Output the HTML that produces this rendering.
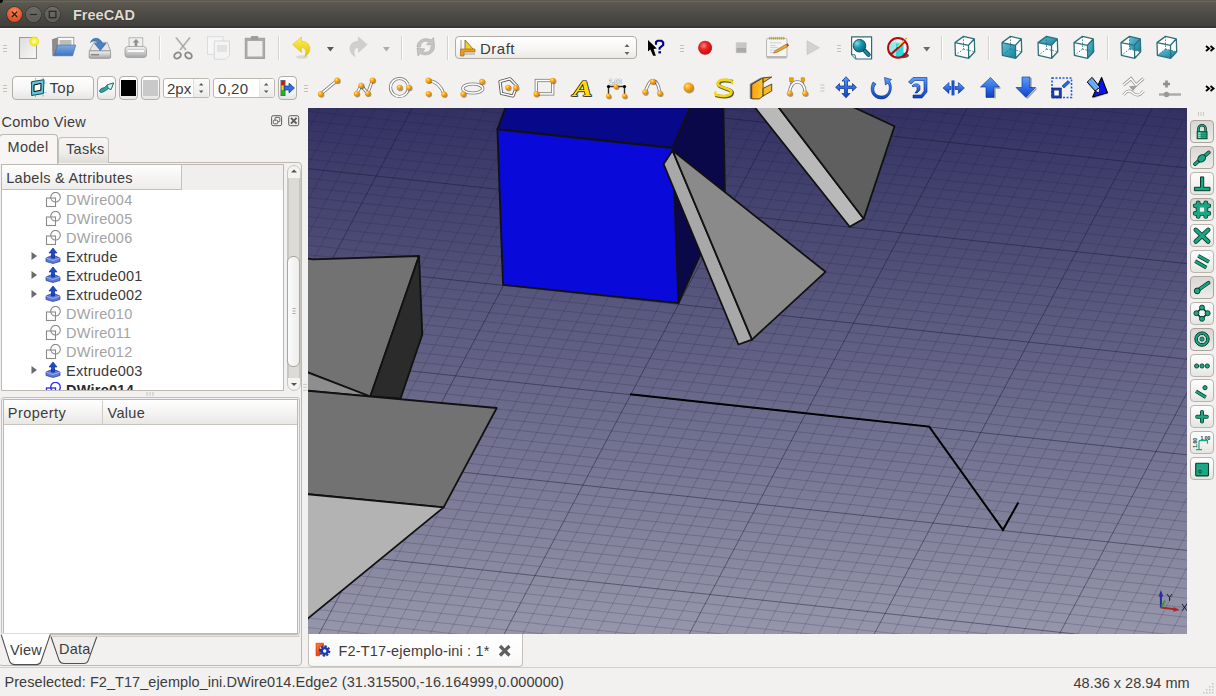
<!DOCTYPE html><html><head><meta charset="utf-8"><style>
*{margin:0;padding:0;box-sizing:border-box}
html,body{width:1216px;height:696px;overflow:hidden;background:#f2f1f0;font-family:"Liberation Sans",sans-serif;color:#3c3c3c}
.a{position:absolute}
#title{left:0;top:0;width:1216px;height:28px;background:linear-gradient(#57544d 0px,#68655b 1.5px,#5a5750 3px,#403f3b 26px,#33322f 27px,#33322f 28px)}
.wb{position:absolute;top:6px;width:16px;height:16px;border-radius:50%}
#ttl{left:73px;top:7px;font-size:14.5px;font-weight:bold;color:#dfdbd2;text-shadow:0 0 1px #1a1a1a}
#tb1{left:0;top:28px;width:1216px;height:80px;background:#f2f1f0;border-top:1px solid #fbfbfa}
.sep{position:absolute;width:2px;height:24px;background:linear-gradient(90deg,#d5d2cd 50%,#fdfdfd 50%)}
.btn{position:absolute;height:24px;border:1px solid #b3aea7;border-radius:4px;background:linear-gradient(#fefefe,#f7f6f5 55%,#e8e6e3)}
.spin{position:absolute;height:20px;border:1px solid #bcb8b1;border-radius:3px;background:#fff}
.txt{position:absolute;white-space:nowrap;font-size:14.5px;line-height:17px}
#vp{left:308px;top:108px;width:879px;height:526px}
.row{position:absolute;left:0;height:19px;width:282px}
.rb{position:absolute;left:1190px;width:23.5px;height:22.5px;border:1px solid #b9b5ae;border-radius:4px;background:linear-gradient(#fdfdfd,#f2f1ef 60%,#e6e4e1)}
.rb.on{background:linear-gradient(#d9d7d3,#e3e1de 50%,#eeedeb);border-color:#a9a49c}
</style></head><body>
<div id="title" class="a">
<div class="a" style="left:0;top:0;width:3px;height:3px;background:#000;border-bottom-right-radius:3px"></div>
<div class="wb" style="left:6.8px;top:6.6px;width:15.5px;height:15.5px;background:radial-gradient(circle at 50% 30%,#f7875a,#e65a26 55%,#c9461a);box-shadow:0 0 0 0.8px rgba(40,30,20,0.55)"></div>
<div class="wb" style="left:25.8px;top:6.6px;width:15.5px;height:15.5px;background:radial-gradient(circle at 50% 30%,#6e6c66,#5e5d58 60%,#55544f);box-shadow:0 0 0 0.8px rgba(35,34,31,0.6),inset 0 0 0 1px rgba(255,255,255,0.08)"></div>
<div class="wb" style="left:44.8px;top:6.6px;width:15.5px;height:15.5px;background:radial-gradient(circle at 50% 30%,#6e6c66,#5e5d58 60%,#55544f);box-shadow:0 0 0 0.8px rgba(35,34,31,0.6),inset 0 0 0 1px rgba(255,255,255,0.08)"></div>
<svg class="a" style="left:0;top:0" width="70" height="28"><path d="M11.8 11.6l5.4 5.4M17.2 11.6l-5.4 5.4" stroke="#2a1510" stroke-width="1.2"/><path d="M30.2 14.5h6.6" stroke="#2a2926" stroke-width="1.3"/><rect x="49.3" y="11.3" width="6.6" height="6.4" fill="none" stroke="#2a2926" stroke-width="1.2"/></svg>
<div id="ttl" class="a">FreeCAD</div>
</div>
<div id="tb1" class="a"></div>
<div class="sep" style="left:159px;top:36px"></div>
<div class="sep" style="left:278px;top:36px"></div>
<div class="sep" style="left:401px;top:36px"></div>
<div class="sep" style="left:447px;top:36px"></div>
<div class="sep" style="left:941px;top:36px"></div>
<div class="sep" style="left:988px;top:36px"></div>
<div class="sep" style="left:1107px;top:36px"></div>
<div class="a" style="left:455px;top:36px;width:182px;height:23px;border:1px solid #b0aca6;border-radius:4px;background:linear-gradient(#fff,#f6f5f4 60%,#ebe9e6)"></div>
<div class="txt" style="left:480px;top:40px;font-size:15px;letter-spacing:0.5px;color:#3c3c3c">Draft</div>
<svg class="a" style="left:455px;top:36px" width="182" height="23"><path d="M169.5 11l2.5-3 2.5 3z M169.5 16l2.5 3 2.5-3z" fill="#666"/><path d="M6 4 L6 18 M6 18 L20 18" stroke="#8a8a8a" stroke-width="0.8"/><path d="M10 4 L10 14 L19 14 Z" fill="#f0d030" stroke="#806010" stroke-width="0.8"/><path d="M5.5 13 L20 13 L20 16 L9 16 L9 20 L5.5 20 Z" fill="#f29a18" stroke="#a05a00" stroke-width="0.6"/></svg>
<div class="btn" style="left:12px;top:76px;width:81.5px"></div>
<svg class="a" style="left:0;top:0" width="60" height="108"><path d="M35.5 78v19M43 77.5v19M30.5 83h16M30.5 92.5h16" stroke="#3aa8b8" stroke-width="0.7" stroke-dasharray="1.5 1"/><path d="M31.6 81.7 L44 79.7 L43.4 93.6 L31.6 95.5 Z" fill="#5cc8d8" stroke="#1a4a58" stroke-width="1"/><path d="M34 85 L41 83.4 L40.8 90.3 L34 91.6 Z" fill="#fff" stroke="#000" stroke-width="1"/></svg>
<div class="txt" style="left:49.5px;top:79px;font-size:15px;letter-spacing:0.3px">Top</div>
<div class="btn" style="left:96.5px;top:76px;width:19px"></div>
<svg class="a" style="left:96px;top:76px" width="20" height="24"><path d="M3.5 15.5 C3.5 13 6 12 9 11.5 L11 9 L17.5 7 L15 13.5 L12.5 12.5 C10 14.5 7 16.5 5 16.5 Z" fill="#2aa8a0" stroke="#0f5a5a" stroke-width="0.8"/><path d="M11 9 L17.5 7 L15 13.5 L12.5 12.5 Z" fill="#d8f4f0" stroke="#0f5a5a" stroke-width="0.7"/></svg>
<div class="btn" style="left:118.5px;top:76px;width:19px"></div><div class="a" style="left:120.5px;top:80px;width:15px;height:16px;background:#000"></div>
<div class="btn" style="left:140.5px;top:76px;width:19px"></div><div class="a" style="left:142.5px;top:80px;width:15px;height:16px;background:#c9c9c9"></div>
<div class="spin" style="left:162.5px;top:78px;width:47px"></div><div class="a" style="left:193px;top:79px;width:1px;height:18px;background:#ddd"></div>
<div class="txt" style="left:167px;top:79.5px;font-size:15px">2px</div>
<div class="spin" style="left:212.5px;top:78px;width:62px"></div><div class="a" style="left:258.5px;top:79px;width:1px;height:18px;background:#ddd"></div>
<div class="txt" style="left:218px;top:79.5px;font-size:15px;letter-spacing:0.3px">0,20</div>
<svg class="a" style="left:162px;top:78px" width="114" height="20"><rect x="32" y="1" width="14.5" height="18" fill="url(#gsp)"/><rect x="97.5" y="1" width="14" height="18" fill="url(#gsp)"/><defs><linearGradient id="gsp" x1="0" y1="0" x2="0" y2="1"><stop offset="0" stop-color="#fbfbfb"/><stop offset="1" stop-color="#ebeae8"/></linearGradient></defs><path d="M37 7.5l2.2-2.6 2.2 2.6zM37 12.5l2.2 2.6 2.2-2.6z M102 7.5l2.2-2.6 2.2 2.6zM102 12.5l2.2 2.6 2.2-2.6z" fill="#555"/></svg>
<div class="btn" style="left:277.5px;top:76px;width:19px"></div>
<svg class="a" style="left:277px;top:76px" width="20" height="24"><rect x="3.5" y="4" width="5" height="16" fill="#666"/><rect x="4.5" y="5" width="3" height="4.5" fill="#e01010"/><rect x="4.5" y="9.5" width="3" height="4.5" fill="#f0e000"/><rect x="4.5" y="14" width="3" height="5" fill="#10c010"/><path d="M7 10h5v-3l5.5 5l-5.5 5v-3h-5z" fill="#2a70e0" stroke="#0a2a80" stroke-width="0.6"/></svg>
<svg class="a" style="left:0;top:0" width="1216" height="108"><defs>
<radialGradient id="gor" cx="0.38" cy="0.35" r="0.7"><stop offset="0" stop-color="#ffe9a0"/><stop offset="0.35" stop-color="#ffb21a"/><stop offset="1" stop-color="#d97800"/></radialGradient>
<linearGradient id="gteal" x1="0" y1="0" x2="1" y2="1"><stop offset="0" stop-color="#5ec3dd"/><stop offset="1" stop-color="#157f96"/></linearGradient>
<linearGradient id="gblue" x1="0" y1="0" x2="0" y2="1"><stop offset="0" stop-color="#5aa0ff"/><stop offset="1" stop-color="#0a3fc8"/></linearGradient>
<linearGradient id="gfold" x1="0" y1="0" x2="0" y2="1"><stop offset="0" stop-color="#7eaee6"/><stop offset="1" stop-color="#3e72ba"/></linearGradient>
<linearGradient id="ggray" x1="0" y1="0" x2="0" y2="1"><stop offset="0" stop-color="#f4f4f4"/><stop offset="1" stop-color="#a6a6a6"/></linearGradient>
<linearGradient id="gpage" x1="0" y1="0" x2="1" y2="1"><stop offset="0" stop-color="#dcdcdc"/><stop offset="1" stop-color="#f8f8f8"/></linearGradient>
<radialGradient id="gglow" cx="0.5" cy="0.5" r="0.5"><stop offset="0" stop-color="#ffffff"/><stop offset="0.3" stop-color="#fff86a"/><stop offset="0.75" stop-color="#efe21c"/><stop offset="1" stop-color="#efe21c" stop-opacity="0"/></radialGradient>
<radialGradient id="glens" cx="0.3" cy="0.3" r="0.75"><stop offset="0" stop-color="#8ad8f4"/><stop offset="0.45" stop-color="#1e9ab4"/><stop offset="1" stop-color="#0a6a80"/></radialGradient>
<radialGradient id="gred" cx="0.4" cy="0.35" r="0.7"><stop offset="0" stop-color="#ff8a8a"/><stop offset="0.4" stop-color="#ee2222"/><stop offset="1" stop-color="#b80d0d"/></radialGradient>
<linearGradient id="gorange" x1="0" y1="0" x2="1" y2="0"><stop offset="0" stop-color="#ff9e10"/><stop offset="1" stop-color="#ffc830"/></linearGradient>
<linearGradient id="gyel" x1="0" y1="0" x2="0" y2="1"><stop offset="0" stop-color="#fff15a"/><stop offset="1" stop-color="#e3c200"/></linearGradient>
</defs><rect x="3.0" y="45.0" width="4" height="1" fill="#c4c1bb"/><rect x="3.0" y="48.0" width="4" height="1" fill="#c4c1bb"/><rect x="3.0" y="51.0" width="4" height="1" fill="#c4c1bb"/><rect x="19.5" y="37.5" width="17" height="21" fill="url(#gpage)" stroke="#9b9b9b" stroke-width="1"/><circle cx="34.2" cy="41.4" r="5.5" fill="url(#gglow)"/><path d="M52.5 39.5 L57.5 38 L57.5 45 L54.5 55.8 L52.8 55.8 Z" fill="#8c8c8c" stroke="#6d6d6d" stroke-width="0.6"/><rect x="57.8" y="37.3" width="16" height="10" fill="#fafafa" stroke="#8a8a8a" stroke-width="0.8"/><rect x="59.5" y="40" width="12" height="6" fill="#bdbdbd"/><path d="M57.6 45.1 L75.8 45.1 L72.6 55.8 L54.3 55.8 Z" fill="url(#gfold)" stroke="#3a68a8" stroke-width="0.6"/><path d="M94.2 42.4 L107.3 42.4 L110.6 50.9 L89.2 50.9 Z" fill="#e6e6e6" stroke="#9a9a9a" stroke-width="0.8"/><rect x="89.2" y="50.9" width="21.4" height="7.4" rx="1" fill="url(#ggray)" stroke="#8d8d8d" stroke-width="0.8"/><rect x="91" y="54" width="8" height="1.5" fill="#8a8a8a"/><path d="M90.5 42.5 C92 37 100 36.5 102.5 43.5 L106 43.5 L100.3 50.5 L94.5 43.5 L98 43.5 C96.5 40.5 93 40.5 90.5 42.5 Z" fill="#4a7fc4" stroke="#2f5e9e" stroke-width="0.6"/><rect x="129" y="37.8" width="13.8" height="10" fill="#efefef" stroke="#a8a8a8" stroke-width="0.8"/><path d="M136 39 L139.5 42.5 L137.3 42.5 L137.3 46 L134.7 46 L134.7 42.5 L132.5 42.5 Z" fill="#8f8f8f"/><rect x="125" y="46.5" width="21.5" height="11" rx="3" fill="url(#ggray)" stroke="#9a9a9a" stroke-width="0.8"/><rect x="127" y="49.5" width="17.5" height="3" rx="1" fill="#fafafa" stroke="#b0b0b0" stroke-width="0.5"/><path d="M176 37.5 L186 50 M190 37.5 L180 50" stroke="#d0d0d0" stroke-width="2.2"/><path d="M176 37.5 L186 50 M190 37.5 L180 50" stroke="#8a8a8a" stroke-width="0.7"/><ellipse cx="177.5" cy="55.5" rx="3.6" ry="2.8" fill="none" stroke="#8a8a8a" stroke-width="1.8" transform="rotate(-35 177.5 55.5)"/><ellipse cx="188.5" cy="55.5" rx="3.6" ry="2.8" fill="none" stroke="#8a8a8a" stroke-width="1.8" transform="rotate(35 188.5 55.5)"/><rect x="207.5" y="36.8" width="15.5" height="17.5" fill="#f6f6f6" stroke="#d6d6d6" stroke-width="0.8"/><path d="M214.3 41 L229.5 41 L229.5 55.5 L225.5 59.2 L214.3 59.2 Z" fill="#f4f4f4" stroke="#d0d0d0" stroke-width="0.8"/><rect x="217" y="45" width="10" height="7" fill="#e2e2e2"/><rect x="245.2" y="38.2" width="19.5" height="20.3" fill="#a9a9a9" stroke="#9a9a9a" stroke-width="0.8"/><rect x="247.5" y="41" width="15" height="15.5" fill="#eeeeee"/><rect x="250.8" y="36" width="7.5" height="4" rx="1" fill="#9c9c9c"/><ellipse cx="302" cy="57" rx="6" ry="1.8" fill="rgba(0,0,0,0.10)"/><path d="M292.6 44.5 L301.4 36.9 L301.4 41.3 C307 41.3 311 45 309.5 51 C308.5 54 306.5 55.8 304.7 56.4 C306.5 53.5 306.5 47.5 301.4 47.6 L301.4 52.4 Z" fill="url(#gyel)" stroke="#d8b800" stroke-width="0.5"/><path d="M326.9 47.1h7l-3.5 4.5z" fill="#5a5a5a"/><path d="M367.2 44.5 L358.4 36.9 L358.4 41.3 C352.8 41.3 348.8 45 350.3 51 C351.3 54 353.3 55.8 355.1 56.4 C353.3 53.5 353.3 47.5 358.4 47.6 L358.4 52.4 Z" fill="#cfcfcf" stroke="#c2c2c2" stroke-width="0.5"/><path d="M382.9 47.1h7l-3.5 4.5z" fill="#acacac"/><path d="M417 47 C417 40 425 36.5 431 40 L433.5 37.5 L434.5 45.5 L426.5 44.5 L429 42 C425 40 420.5 42 420.5 47 Z" fill="#c4c4c4" stroke="#a8a8a8" stroke-width="0.6"/><path d="M434.5 46.5 C434.5 53.5 426.5 57 420.5 53.5 L418 56 L417 48 L425 49 L422.5 51.5 C426.5 53.5 431 51.5 431 46.5 Z" fill="#c4c4c4" stroke="#a8a8a8" stroke-width="0.6"/><path d="M648 40 L648 51.6 L650.3 49.5 L653.1 55.7 L655.9 55.7 L653.6 48.9 L656.8 48.6 Z" fill="#000" stroke="#fff" stroke-width="0.6" paint-order="stroke"/><path d="M656 44.8 L656 42 L657.6 40.8 L661.6 40.8 L663.2 42.4 L663.2 45 L659.6 48 L659.6 49.8" fill="none" stroke="#000080" stroke-width="2.1"/><rect x="658.4" y="51.2" width="2.6" height="2.2" fill="#000080"/><rect x="680.0" y="45.0" width="4" height="1" fill="#c4c1bb"/><rect x="680.0" y="48.0" width="4" height="1" fill="#c4c1bb"/><rect x="680.0" y="51.0" width="4" height="1" fill="#c4c1bb"/><circle cx="705.1" cy="47.8" r="7" fill="url(#gred)"/><rect x="736" y="42.3" width="10.5" height="10.7" fill="#c6c6c6" stroke="#d6d6d6" stroke-width="0.6"/><rect x="736.5" y="48" width="9.5" height="4.5" fill="#a9a9a9"/><rect x="766.5" y="38.5" width="20.5" height="19.5" rx="1.2" fill="#f4f4f2" stroke="#a8a8a8" stroke-width="0.8"/><rect x="767" y="56" width="19.5" height="2" fill="#b8b8b8"/><rect x="769.0" y="36.8" width="1.5" height="3" rx="0.7" fill="#c4a82a"/><rect x="771.0" y="36.8" width="1.5" height="3" rx="0.7" fill="#c4a82a"/><rect x="773.0" y="36.8" width="1.5" height="3" rx="0.7" fill="#c4a82a"/><rect x="775.0" y="36.8" width="1.5" height="3" rx="0.7" fill="#c4a82a"/><rect x="777.0" y="36.8" width="1.5" height="3" rx="0.7" fill="#c4a82a"/><rect x="779.0" y="36.8" width="1.5" height="3" rx="0.7" fill="#c4a82a"/><rect x="781.0" y="36.8" width="1.5" height="3" rx="0.7" fill="#c4a82a"/><rect x="783.0" y="36.8" width="1.5" height="3" rx="0.7" fill="#c4a82a"/><path d="M770 42.8h11M770 45.5h5.5M770 47.6h8M770 50.2h6M770 52.5h5" stroke="#d0d0d0" stroke-width="1"/><path d="M773.5 53.2 L775.3 50.6 L786.2 44.2 L787.8 46.6 L776.8 52.4 Z" fill="#e8a830" stroke="#7a5010" stroke-width="0.5"/><path d="M786.2 44.2 L787.8 46.6 L789 45.6 L787.6 43.3 Z" fill="#e02828"/><path d="M807 40.7 L819.4 47.7 L807 54.7 Z" fill="#d2d2d2" stroke="#c0c0c0" stroke-width="0.6"/><rect x="837.0" y="45.0" width="4" height="1" fill="#c4c1bb"/><rect x="837.0" y="48.0" width="4" height="1" fill="#c4c1bb"/><rect x="837.0" y="51.0" width="4" height="1" fill="#c4c1bb"/><path d="M851.6 36.8 H871.6 V59 H856 L851.6 54.6 Z" fill="#fff" stroke="#2a6c7a" stroke-width="1.2" stroke-linejoin="round"/><path d="M851.6 54.6 L855 54.8 L856 59" fill="#e8f0f0" stroke="#2a6c7a" stroke-width="0.9"/><line x1="864.8" y1="50.8" x2="868.6" y2="54.8" stroke="#0c4a58" stroke-width="4.2" stroke-linecap="round"/><line x1="864.8" y1="50.8" x2="868.6" y2="54.8" stroke="#1a8aa2" stroke-width="2.6" stroke-linecap="round"/><circle cx="859.5" cy="45.7" r="6.3" fill="url(#glens)" stroke="#0c4a58" stroke-width="0.9"/><ellipse cx="902" cy="55.5" rx="7" ry="2.8" fill="#2a3a3a" opacity="0.85"/><path d="M889.5 44 L895.5 41.5 L903 43.5 L903 57 L895 57.5 L889.5 54 Z" fill="#9ae8ee"/><path d="M896 43.5 L903.5 44.5 L903.5 57 L896 57.5 Z" fill="#2ad8e4"/><circle cx="897.9" cy="47.9" r="9.8" fill="none" stroke="#b00c0c" stroke-width="2"/><line x1="890.8" y1="54.6" x2="905" y2="41.4" stroke="#b00c0c" stroke-width="2"/><line x1="897.5" y1="46.8" x2="904" y2="40.8" stroke="#f0d818" stroke-width="1.5"/><circle cx="906" cy="38.6" r="0.9" fill="#e08a20"/><path d="M923.2 47.1h7l-3.5 4.5z" fill="#6a6a6a"/><polygon points="955.0,42.6 963.5,36.4 974.3,38.8 974.7,51.7 968.7,58.3 955.4,55.3" fill="#fff"/><path d="M963.5,36.4 L963.5,49.1 M963.5,49.1 L955.4,55.3 M963.5,49.1 L974.7,51.7" stroke="#2d6f7b" stroke-width="0.9" stroke-dasharray="1.5 1.5" fill="none"/><path d="M955.0,42.6 L968.5,45.3 L968.7,58.3 L955.4,55.3 Z M955.0,42.6 L963.5,36.4 L974.3,38.8 L968.5,45.3 M974.3,38.8 L974.7,51.7 L968.7,58.3" stroke="#2d6f7b" stroke-width="1.3" fill="none" stroke-linejoin="round"/><polygon points="1002.0,42.6 1010.5,36.4 1021.3,38.8 1021.7,51.7 1015.7,58.3 1002.4,55.3" fill="#fff"/><polygon points="1002.0,42.6 1015.5,45.3 1015.7,58.3 1002.4,55.3" fill="url(#gteal)"/><path d="M1010.5,36.4 L1010.5,49.1 M1010.5,49.1 L1002.4,55.3 M1010.5,49.1 L1021.7,51.7" stroke="#2d6f7b" stroke-width="0.9" stroke-dasharray="1.5 1.5" fill="none"/><path d="M1002.0,42.6 L1015.5,45.3 L1015.7,58.3 L1002.4,55.3 Z M1002.0,42.6 L1010.5,36.4 L1021.3,38.8 L1015.5,45.3 M1021.3,38.8 L1021.7,51.7 L1015.7,58.3" stroke="#2d6f7b" stroke-width="1.3" fill="none" stroke-linejoin="round"/><polygon points="1038.0,42.6 1046.5,36.4 1057.3,38.8 1057.7,51.7 1051.7,58.3 1038.4,55.3" fill="#fff"/><polygon points="1038.0,42.6 1046.5,36.4 1057.3,38.8 1051.5,45.3" fill="url(#gteal)"/><path d="M1046.5,36.4 L1046.5,49.1 M1046.5,49.1 L1038.4,55.3 M1046.5,49.1 L1057.7,51.7" stroke="#2d6f7b" stroke-width="0.9" stroke-dasharray="1.5 1.5" fill="none"/><path d="M1038.0,42.6 L1051.5,45.3 L1051.7,58.3 L1038.4,55.3 Z M1038.0,42.6 L1046.5,36.4 L1057.3,38.8 L1051.5,45.3 M1057.3,38.8 L1057.7,51.7 L1051.7,58.3" stroke="#2d6f7b" stroke-width="1.3" fill="none" stroke-linejoin="round"/><polygon points="1074.0,42.6 1082.5,36.4 1093.3,38.8 1093.7,51.7 1087.7,58.3 1074.4,55.3" fill="#fff"/><polygon points="1087.5,45.3 1093.3,38.8 1093.7,51.7 1087.7,58.3" fill="url(#gteal)"/><path d="M1082.5,36.4 L1082.5,49.1 M1082.5,49.1 L1074.4,55.3 M1082.5,49.1 L1093.7,51.7" stroke="#2d6f7b" stroke-width="0.9" stroke-dasharray="1.5 1.5" fill="none"/><path d="M1074.0,42.6 L1087.5,45.3 L1087.7,58.3 L1074.4,55.3 Z M1074.0,42.6 L1082.5,36.4 L1093.3,38.8 L1087.5,45.3 M1093.3,38.8 L1093.7,51.7 L1087.7,58.3" stroke="#2d6f7b" stroke-width="1.3" fill="none" stroke-linejoin="round"/><polygon points="1121.0,42.6 1129.5,36.4 1140.3,38.8 1140.7,51.7 1134.7,58.3 1121.4,55.3" fill="#fff"/><polygon points="1129.5,36.4 1140.3,38.8 1140.7,51.7 1129.5,49.1" fill="url(#gteal)"/><path d="M1129.5,36.4 L1129.5,49.1 M1129.5,49.1 L1121.4,55.3 M1129.5,49.1 L1140.7,51.7" stroke="#2d6f7b" stroke-width="0.9" stroke-dasharray="1.5 1.5" fill="none"/><path d="M1121.0,42.6 L1134.5,45.3 L1134.7,58.3 L1121.4,55.3 Z M1121.0,42.6 L1129.5,36.4 L1140.3,38.8 L1134.5,45.3 M1140.3,38.8 L1140.7,51.7 L1134.7,58.3" stroke="#2d6f7b" stroke-width="1.3" fill="none" stroke-linejoin="round"/><polygon points="1157.0,42.6 1165.5,36.4 1176.3,38.8 1176.7,51.7 1170.7,58.3 1157.4,55.3" fill="#fff"/><polygon points="1157.4,55.3 1170.7,58.3 1176.7,51.7 1165.5,49.1" fill="url(#gteal)"/><path d="M1165.5,36.4 L1165.5,49.1 M1165.5,49.1 L1157.4,55.3 M1165.5,49.1 L1176.7,51.7" stroke="#2d6f7b" stroke-width="0.9" stroke-dasharray="1.5 1.5" fill="none"/><path d="M1157.0,42.6 L1170.5,45.3 L1170.7,58.3 L1157.4,55.3 Z M1157.0,42.6 L1165.5,36.4 L1176.3,38.8 L1170.5,45.3 M1176.3,38.8 L1176.7,51.7 L1170.7,58.3" stroke="#2d6f7b" stroke-width="1.3" fill="none" stroke-linejoin="round"/><path d="M1206 46 L1209 48.5 L1206 51 M1210.5 46 L1213.5 48.5 L1210.5 51" stroke="#000" stroke-width="1.9" fill="none"/><path d="M320.7 94.1 L337.1 80.4" stroke="#7a7a7a" stroke-width="3.2" fill="none" stroke-linejoin="round"/><path d="M320.7 94.1 L337.1 80.4" stroke="#fff" stroke-width="1.6" fill="none" stroke-linejoin="round"/><circle cx="321.6" cy="95.0" r="2.8" fill="rgba(0,0,0,0.35)"/><circle cx="320.7" cy="94.1" r="2.8" fill="url(#gor)"/><circle cx="338.0" cy="81.3" r="2.8" fill="rgba(0,0,0,0.35)"/><circle cx="337.1" cy="80.4" r="2.8" fill="url(#gor)"/><path d="M356.6 93.7 L361.1 85.5 L367.7 93.4 L372.5 80.2" stroke="#7a7a7a" stroke-width="3.2" fill="none" stroke-linejoin="round"/><path d="M356.6 93.7 L361.1 85.5 L367.7 93.4 L372.5 80.2" stroke="#fff" stroke-width="1.6" fill="none" stroke-linejoin="round"/><circle cx="357.5" cy="94.6" r="2.8" fill="rgba(0,0,0,0.35)"/><circle cx="356.6" cy="93.7" r="2.8" fill="url(#gor)"/><circle cx="362.0" cy="86.4" r="2.8" fill="rgba(0,0,0,0.35)"/><circle cx="361.1" cy="85.5" r="2.8" fill="url(#gor)"/><circle cx="368.6" cy="94.3" r="2.8" fill="rgba(0,0,0,0.35)"/><circle cx="367.7" cy="93.4" r="2.8" fill="url(#gor)"/><circle cx="373.4" cy="81.1" r="2.8" fill="rgba(0,0,0,0.35)"/><circle cx="372.5" cy="80.2" r="2.8" fill="url(#gor)"/><circle cx="399.5" cy="87.5" r="9" fill="none" stroke="#7a7a7a" stroke-width="3.2"/><circle cx="399.5" cy="87.5" r="9" fill="none" stroke="#fff" stroke-width="1.6"/><circle cx="400.4" cy="88.4" r="2.8" fill="rgba(0,0,0,0.35)"/><circle cx="399.5" cy="87.5" r="2.8" fill="url(#gor)"/><circle cx="409.8" cy="88.4" r="2.8" fill="rgba(0,0,0,0.35)"/><circle cx="408.9" cy="87.5" r="2.8" fill="url(#gor)"/><path d="M428.4 80.4 Q440 82 444 94.3" stroke="#7a7a7a" stroke-width="3.2" fill="none"/><path d="M428.4 80.4 Q440 82 444 94.3" stroke="#fff" stroke-width="1.6" fill="none"/><circle cx="429.3" cy="81.3" r="2.8" fill="rgba(0,0,0,0.35)"/><circle cx="428.4" cy="80.4" r="2.8" fill="url(#gor)"/><circle cx="429.3" cy="94.6" r="2.8" fill="rgba(0,0,0,0.35)"/><circle cx="428.4" cy="93.7" r="2.8" fill="url(#gor)"/><circle cx="444.9" cy="95.2" r="2.8" fill="rgba(0,0,0,0.35)"/><circle cx="444.0" cy="94.3" r="2.8" fill="url(#gor)"/><ellipse cx="472.8" cy="88.5" rx="10" ry="4.5" fill="none" stroke="#7a7a7a" stroke-width="3.2"/><ellipse cx="472.8" cy="88.5" rx="10" ry="4.5" fill="none" stroke="#fff" stroke-width="1.6"/><circle cx="464.1" cy="94.9" r="2.8" fill="rgba(0,0,0,0.35)"/><circle cx="463.2" cy="94.0" r="2.8" fill="url(#gor)"/><circle cx="482.9" cy="82.5" r="2.8" fill="rgba(0,0,0,0.35)"/><circle cx="482.0" cy="81.6" r="2.8" fill="url(#gor)"/><path d="M500 81.5 L510 78.8 L517 86 L513 96 L501.5 93.5 Z" stroke="#555" stroke-width="3.2" fill="none" stroke-linejoin="round"/><path d="M500 81.5 L510 78.8 L517 86 L513 96 L501.5 93.5 Z" stroke="#fff" stroke-width="1.5" fill="none" stroke-linejoin="round"/><circle cx="508.9" cy="88.4" r="2.8" fill="rgba(0,0,0,0.35)"/><circle cx="508.0" cy="87.5" r="2.8" fill="url(#gor)"/><circle cx="516.8" cy="88.7" r="2.8" fill="rgba(0,0,0,0.35)"/><circle cx="515.9" cy="87.8" r="2.8" fill="url(#gor)"/><rect x="536.3" y="80.5" width="16.4" height="13.4" stroke="#7a7a7a" stroke-width="3.2" fill="none"/><rect x="536.3" y="80.5" width="16.4" height="13.4" stroke="#fff" stroke-width="1.6" fill="none"/><circle cx="537.2" cy="94.8" r="2.8" fill="rgba(0,0,0,0.35)"/><circle cx="536.3" cy="93.9" r="2.8" fill="url(#gor)"/><circle cx="553.6" cy="81.4" r="2.8" fill="rgba(0,0,0,0.35)"/><circle cx="552.7" cy="80.5" r="2.8" fill="url(#gor)"/><text x="574" y="97.3" font-family="Liberation Serif" font-weight="bold" font-style="italic" font-size="24" fill="#333" opacity="0.6" textLength="19.5" lengthAdjust="spacingAndGlyphs">A</text><text x="573" y="96" font-family="Liberation Serif" font-weight="bold" font-style="italic" font-size="24" fill="#ffdd00" stroke="#000" stroke-width="1.1" paint-order="stroke" textLength="19.5" lengthAdjust="spacingAndGlyphs">A</text><text x="609" y="84" font-family="Liberation Sans" font-size="6.5" font-weight="bold" fill="#fff" stroke="#777" stroke-width="0.6" paint-order="stroke">1.00</text><path d="M608.5 86.5 L624.5 86.5 M608.5 86.5 L608.5 96 M624.5 86.5 L624.5 96" stroke="#333" stroke-width="1.4"/><circle cx="608.5" cy="86.5" r="1.6" fill="#000"/><circle cx="624.5" cy="86.5" r="1.6" fill="#000"/><circle cx="616.9" cy="87.4" r="2.5" fill="rgba(0,0,0,0.35)"/><circle cx="616.0" cy="86.5" r="2.5" fill="url(#gor)"/><circle cx="609.4" cy="96.9" r="2.5" fill="rgba(0,0,0,0.35)"/><circle cx="608.5" cy="96.0" r="2.5" fill="url(#gor)"/><circle cx="625.4" cy="96.9" r="2.5" fill="rgba(0,0,0,0.35)"/><circle cx="624.5" cy="96.0" r="2.5" fill="url(#gor)"/><path d="M645.1 92 Q650 79 652.8 81 Q658 80 659.9 93.4" stroke="#7a7a7a" stroke-width="3.2" fill="none"/><path d="M645.1 92 Q650 79 652.8 81 Q658 80 659.9 93.4" stroke="#fff" stroke-width="1.6" fill="none"/><circle cx="646.0" cy="92.9" r="2.8" fill="rgba(0,0,0,0.35)"/><circle cx="645.1" cy="92.0" r="2.8" fill="url(#gor)"/><circle cx="653.7" cy="82.5" r="2.8" fill="rgba(0,0,0,0.35)"/><circle cx="652.8" cy="81.6" r="2.8" fill="url(#gor)"/><circle cx="660.8" cy="94.3" r="2.8" fill="rgba(0,0,0,0.35)"/><circle cx="659.9" cy="93.4" r="2.8" fill="url(#gor)"/><circle cx="689.4" cy="88.4" r="5.0" fill="rgba(0,0,0,0.35)"/><circle cx="688.5" cy="87.5" r="5.0" fill="url(#gor)"/><path d="M732 81 C726 79.3 719.5 79.3 718 82.3 C716.5 85.5 721.5 87 725.5 88.2 C730.5 89.6 732.5 91.2 730.8 93.8 C728.5 96.5 720 96.5 714.8 94.6" fill="none" stroke="#222" stroke-width="3.6" transform="translate(0.8,0.8)" opacity="0.75"/><path d="M732 81 C726 79.3 719.5 79.3 718 82.3 C716.5 85.5 721.5 87 725.5 88.2 C730.5 89.6 732.5 91.2 730.8 93.8 C728.5 96.5 720 96.5 714.8 94.6" fill="none" stroke="#f5d800" stroke-width="2.6"/><path d="M731.5 80.5 L732.5 84.3 M715.5 91.5 L715.3 95" stroke="#f5d800" stroke-width="2.2"/><path d="M749.8 84 L761.5 77.2 L761.5 96 L757.5 98.8 L749.8 98.8 Z" fill="#555" opacity="0.8"/><path d="M751.7 84.5 L763.1 77.8 L763.1 96.1 L759.2 98.9 L751.7 98.9 Z" fill="url(#gorange)" stroke="#2a2a2a" stroke-width="0.8" stroke-linejoin="round"/><path d="M763.1 77.8 L771.7 77 L763.1 82.6 Z" fill="#f5ae20" stroke="#2a2a2a" stroke-width="0.8" stroke-linejoin="round"/><path d="M763.1 88.4 L771.7 84.1 L771.7 91 L763.1 96.1 Z" fill="#f8b828" stroke="#2a2a2a" stroke-width="0.8" stroke-linejoin="round"/><path d="M791.4 79.6 L789.6 93.3 M802.9 79.6 L805 93.3" stroke="#555" stroke-width="0.8"/><path d="M789.6 93.3 C789.5 78 805.5 78 805 93.3" stroke="#7a7a7a" stroke-width="3.2" fill="none"/><path d="M789.6 93.3 C789.5 78 805.5 78 805 93.3" stroke="#fff" stroke-width="1.6" fill="none"/><rect x="789.6" y="77.8" width="3.6" height="3.6" fill="#f5a000" stroke="#c07000" stroke-width="0.5"/><rect x="801.1" y="77.8" width="3.6" height="3.6" fill="#f5a000" stroke="#c07000" stroke-width="0.5"/><circle cx="790.5" cy="94.2" r="2.8" fill="rgba(0,0,0,0.35)"/><circle cx="789.6" cy="93.3" r="2.8" fill="url(#gor)"/><circle cx="805.9" cy="94.2" r="2.8" fill="rgba(0,0,0,0.35)"/><circle cx="805.0" cy="93.3" r="2.8" fill="url(#gor)"/><rect x="820.5" y="84.5" width="4" height="1" fill="#c4c1bb"/><rect x="820.5" y="87.5" width="4" height="1" fill="#c4c1bb"/><rect x="820.5" y="90.5" width="4" height="1" fill="#c4c1bb"/><path d="M846 76.7 L850 81 L847.5 81 L847.5 86 L852.5 86 L852.5 83.5 L856.5 87.3 L852.5 91 L852.5 88.5 L847.5 88.5 L847.5 93.5 L850 93.5 L846 97.8 L842 93.5 L844.5 93.5 L844.5 88.5 L839.5 88.5 L839.5 91 L835.6 87.3 L839.5 83.5 L839.5 86 L844.5 86 L844.5 81 L842 81 Z" fill="url(#gblue)" stroke="#0a2a80" stroke-width="0.7"/><path d="M876 84 C872 88 873.5 95.5 881 96 C888 96.5 891.5 89 888 83 L885.5 85 L884.5 77.5 L891.5 79.5 L889.5 81 C894 88 890 99.5 881 99 C871.5 98.5 869 89 873 82 Z" fill="url(#gblue)" stroke="#0a2a80" stroke-width="0.6"/><path d="M908.5 82 L913 77.5 L927 77.5 L927 92 L922 98 L913 98 L913 95 L921 95 L924 91 L924 80.5 L915 80.5 L911 84 Z" fill="url(#gblue)" stroke="#0a2a80" stroke-width="0.6"/><path d="M912 86 C914 83 919 83 920 86 L920 90 L917 93 L915 93 L917 90 L917 87 C916 86 914 86 913 87 Z" fill="url(#gblue)" stroke="#0a2a80" stroke-width="0.6"/><rect x="951.5" y="80.4" width="3" height="15" fill="#1a50d0"/><path d="M943 88 L949 82.5 L949 86.5 L951 86.5 L951 89.5 L949 89.5 L949 93.5 Z" fill="url(#gblue)" stroke="#0a2a80" stroke-width="0.6"/><path d="M964.4 88 L958.4 82.5 L958.4 86.5 L955 86.5 L955 89.5 L958.4 89.5 L958.4 93.5 Z" fill="url(#gblue)" stroke="#0a2a80" stroke-width="0.6"/><path d="M990.5 77.4 L999.5 87 L994 87 L994 97.4 L986 97.4 L986 87 L980.5 87 Z" fill="url(#gblue)" stroke="#0a2a80" stroke-width="0.6"/><path d="M994.8 88 L1000.5 88 M995 98.5 L995 88.5" stroke="rgba(0,0,0,0.35)" stroke-width="1.3"/><path d="M1026 97.6 L1035.5 87.5 L1030 87.5 L1030 77 L1022 77 L1022 87.5 L1016 87.5 Z" fill="url(#gblue)" stroke="#0a2a80" stroke-width="0.6"/><path d="M1031 78 L1031 88 M1036.5 88.5 L1027 98.5" stroke="rgba(0,0,0,0.35)" stroke-width="1.3"/><rect x="1052" y="78" width="19.5" height="19.5" fill="none" stroke="#1a5cf0" stroke-width="1.6" stroke-dasharray="2 1.5"/><rect x="1051.8" y="88" width="9.5" height="10" fill="#1c3aa8" stroke="#0a1f70" stroke-width="0.6"/><rect x="1054.3" y="90.5" width="4.5" height="5" fill="#fff"/><path d="M1062 86 L1068 80.5 L1070 82.5 L1064 88 Z" fill="#2a68e0" stroke="#0a2a80" stroke-width="0.6"/><path d="M1102 78.5 L1108.5 93.5 L1093 98.5 Z" fill="rgba(0,0,0,0.3)"/><path d="M1101.6 77.4 L1107.4 92.7 L1092.6 97 Z" fill="#0a14f0" stroke="#000" stroke-width="1.1" stroke-linejoin="round"/><path d="M1095.1 91 L1099.9 87.1 L1099 92.8 Z" fill="#fff" stroke="#000" stroke-width="0.7"/><path d="M1087.2 82.1 L1092.1 77.4 L1099.9 87.1 L1095.1 91 Z" fill="#5a9ff0" stroke="#000" stroke-width="1"/><path d="M1089.2 80.3 L1096.8 89.3 M1091 78.8 L1098.6 87.8" stroke="#9cc8ff" stroke-width="0.8"/><path d="M1123.5 85 L1131 78.5 L1136 85 L1143.5 78.5" stroke="#9a9a9a" stroke-width="3" fill="none"/><path d="M1123.5 85 L1131 78.5 L1136 85 L1143.5 78.5" stroke="#fff" stroke-width="1.4" fill="none"/><path d="M1123.5 95 C1127 90 1130 90 1133 93 C1136 96 1140 96 1143.5 91" stroke="#9a9a9a" stroke-width="3" fill="none"/><path d="M1123.5 95 C1127 90 1130 90 1133 93 C1136 96 1140 96 1143.5 91" stroke="#fff" stroke-width="1.4" fill="none"/><path d="M1129 86 L1137 86 L1133 91 Z" fill="#9f9f9f"/><path d="M1166.5 80.5 v7 M1163 84 h7" stroke="#8f8f8f" stroke-width="2.6"/><path d="M1159 94.5 h22" stroke="#a9a9a9" stroke-width="2.4"/><circle cx="1166.5" cy="94.5" r="2.8" fill="#999"/><path d="M1206 86 L1209 88.5 L1206 91 M1210.5 86 L1213.5 88.5 L1210.5 91" stroke="#000" stroke-width="1.9" fill="none"/><rect x="3.0" y="85.0" width="4" height="1" fill="#c4c1bb"/><rect x="3.0" y="88.0" width="4" height="1" fill="#c4c1bb"/><rect x="3.0" y="91.0" width="4" height="1" fill="#c4c1bb"/><rect x="304.0" y="85.0" width="4" height="1" fill="#c4c1bb"/><rect x="304.0" y="88.0" width="4" height="1" fill="#c4c1bb"/><rect x="304.0" y="91.0" width="4" height="1" fill="#c4c1bb"/></svg>
<div class="txt" style="left:0;top:0"></div>
<div class="a" style="left:0;top:108px;width:302px;height:558px"><div class="txt" style="left:1.5px;top:6px;font-size:14.5px;letter-spacing:0.25px">Combo View</div><svg class="a" style="left:270px;top:6px" width="32" height="14"><rect x="1.6" y="1.7" width="10" height="10" rx="1.6" fill="none" stroke="#5e5c58" stroke-width="1"/><rect x="5" y="3.4" width="4.8" height="4.4" rx="1" fill="none" stroke="#5e5c58" stroke-width="1"/><rect x="3.3" y="6.2" width="4.4" height="3.6" rx="1" fill="#f4f3f2" stroke="#5e5c58" stroke-width="1"/><rect x="18.7" y="1.7" width="10" height="10" rx="1.6" fill="none" stroke="#5e5c58" stroke-width="1"/><path d="M21 3.9 L26.6 9.6 M26.6 3.9 L21 9.6" stroke="#5e5c58" stroke-width="2"/></svg><div class="a" style="left:-2px;top:54px;width:304px;height:504px;border:1px solid #bdb9b2;border-radius:4px"></div><div class="a" style="left:-1px;top:26px;width:59px;height:30px;border:1px solid #bdb9b2;border-bottom:none;border-radius:4px 4px 0 0;background:#f7f6f5"></div><div class="a" style="left:58px;top:28.5px;width:50.5px;height:26.5px;border:1px solid #c3bfb9;border-bottom:none;border-radius:4px 4px 0 0;background:linear-gradient(#f6f5f4,#eeedeb 60%,#dddbd8)"></div><div class="a" style="left:1px;top:54px;width:56px;height:2px;background:#f7f6f5"></div><div class="txt" style="left:7.5px;top:31.3px;font-size:14.5px;letter-spacing:0.3px">Model</div><div class="txt" style="left:66px;top:33px;font-size:14.5px;letter-spacing:0.3px">Tasks</div><div class="a" style="left:1px;top:56px;width:283px;height:227px;border:1px solid #bdb9b2;background:#fff;overflow:hidden"><div class="a" style="left:0;top:0;width:281px;height:25px;background:#f0efee"></div><div class="a" style="left:0;top:0;width:180px;height:25px;background:linear-gradient(#fefefe,#f6f5f4 50%,#eeedeb);border-right:1px solid #c4c0ba;border-bottom:1px solid #c4c0ba"></div><div class="txt" style="left:4.2px;top:5px;font-size:14.5px;letter-spacing:0.3px">Labels &amp; Attributes</div><svg class="a" style="left:40.5px;top:26.5px" width="19" height="16"><rect x="3.5" y="6" width="9" height="8.5" fill="none" stroke="#8a8a8a" stroke-width="1.1"/><circle cx="12.5" cy="5.2" r="4.8" fill="none" stroke="#8a8a8a" stroke-width="1.1"/></svg><div class="txt" style="left:64px;top:27.0px;font-size:14.5px;letter-spacing:0.25px;color:#a3a3a3;font-weight:normal">DWire004</div><svg class="a" style="left:40.5px;top:45.5px" width="19" height="16"><rect x="3.5" y="6" width="9" height="8.5" fill="none" stroke="#8a8a8a" stroke-width="1.1"/><circle cx="12.5" cy="5.2" r="4.8" fill="none" stroke="#8a8a8a" stroke-width="1.1"/></svg><div class="txt" style="left:64px;top:46.0px;font-size:14.5px;letter-spacing:0.25px;color:#a3a3a3;font-weight:normal">DWire005</div><svg class="a" style="left:40.5px;top:64.5px" width="19" height="16"><rect x="3.5" y="6" width="9" height="8.5" fill="none" stroke="#8a8a8a" stroke-width="1.1"/><circle cx="12.5" cy="5.2" r="4.8" fill="none" stroke="#8a8a8a" stroke-width="1.1"/></svg><div class="txt" style="left:64px;top:65.0px;font-size:14.5px;letter-spacing:0.25px;color:#a3a3a3;font-weight:normal">DWire006</div><svg class="a" style="left:41.5px;top:82px" width="18" height="17"><path d="M2 11 L9 8 L16 11 L16 14.5 L9 16.5 L2 14.5 Z" fill="#5a7ad8" stroke="#2a3a90" stroke-width="0.7"/><path d="M2 11 L9 13.5 L16 11" fill="none" stroke="#aab8f0" stroke-width="0.8"/><path d="M9 1 L13 6 L10.5 6 L10.5 11 L7.5 11 L7.5 6 L5 6 Z" fill="#1a4ad0" stroke="#0a2080" stroke-width="0.6"/></svg><svg class="a" style="left:27.5px;top:86px" width="8" height="10"><path d="M1.5 1 L7 5 L1.5 9 Z" fill="#6a6a6a"/></svg><div class="txt" style="left:64px;top:84.0px;font-size:14.5px;letter-spacing:0.25px;color:#3a3a3a;font-weight:normal">Extrude</div><svg class="a" style="left:41.5px;top:101px" width="18" height="17"><path d="M2 11 L9 8 L16 11 L16 14.5 L9 16.5 L2 14.5 Z" fill="#5a7ad8" stroke="#2a3a90" stroke-width="0.7"/><path d="M2 11 L9 13.5 L16 11" fill="none" stroke="#aab8f0" stroke-width="0.8"/><path d="M9 1 L13 6 L10.5 6 L10.5 11 L7.5 11 L7.5 6 L5 6 Z" fill="#1a4ad0" stroke="#0a2080" stroke-width="0.6"/></svg><svg class="a" style="left:27.5px;top:105px" width="8" height="10"><path d="M1.5 1 L7 5 L1.5 9 Z" fill="#6a6a6a"/></svg><div class="txt" style="left:64px;top:103.0px;font-size:14.5px;letter-spacing:0.25px;color:#3a3a3a;font-weight:normal">Extrude001</div><svg class="a" style="left:41.5px;top:120px" width="18" height="17"><path d="M2 11 L9 8 L16 11 L16 14.5 L9 16.5 L2 14.5 Z" fill="#5a7ad8" stroke="#2a3a90" stroke-width="0.7"/><path d="M2 11 L9 13.5 L16 11" fill="none" stroke="#aab8f0" stroke-width="0.8"/><path d="M9 1 L13 6 L10.5 6 L10.5 11 L7.5 11 L7.5 6 L5 6 Z" fill="#1a4ad0" stroke="#0a2080" stroke-width="0.6"/></svg><svg class="a" style="left:27.5px;top:124px" width="8" height="10"><path d="M1.5 1 L7 5 L1.5 9 Z" fill="#6a6a6a"/></svg><div class="txt" style="left:64px;top:122.0px;font-size:14.5px;letter-spacing:0.25px;color:#3a3a3a;font-weight:normal">Extrude002</div><svg class="a" style="left:40.5px;top:140.5px" width="19" height="16"><rect x="3.5" y="6" width="9" height="8.5" fill="none" stroke="#8a8a8a" stroke-width="1.1"/><circle cx="12.5" cy="5.2" r="4.8" fill="none" stroke="#8a8a8a" stroke-width="1.1"/></svg><div class="txt" style="left:64px;top:141.0px;font-size:14.5px;letter-spacing:0.25px;color:#a3a3a3;font-weight:normal">DWire010</div><svg class="a" style="left:40.5px;top:159.5px" width="19" height="16"><rect x="3.5" y="6" width="9" height="8.5" fill="none" stroke="#8a8a8a" stroke-width="1.1"/><circle cx="12.5" cy="5.2" r="4.8" fill="none" stroke="#8a8a8a" stroke-width="1.1"/></svg><div class="txt" style="left:64px;top:160.0px;font-size:14.5px;letter-spacing:0.25px;color:#a3a3a3;font-weight:normal">DWire011</div><svg class="a" style="left:40.5px;top:178.5px" width="19" height="16"><rect x="3.5" y="6" width="9" height="8.5" fill="none" stroke="#8a8a8a" stroke-width="1.1"/><circle cx="12.5" cy="5.2" r="4.8" fill="none" stroke="#8a8a8a" stroke-width="1.1"/></svg><div class="txt" style="left:64px;top:179.0px;font-size:14.5px;letter-spacing:0.25px;color:#a3a3a3;font-weight:normal">DWire012</div><svg class="a" style="left:41.5px;top:196px" width="18" height="17"><path d="M2 11 L9 8 L16 11 L16 14.5 L9 16.5 L2 14.5 Z" fill="#5a7ad8" stroke="#2a3a90" stroke-width="0.7"/><path d="M2 11 L9 13.5 L16 11" fill="none" stroke="#aab8f0" stroke-width="0.8"/><path d="M9 1 L13 6 L10.5 6 L10.5 11 L7.5 11 L7.5 6 L5 6 Z" fill="#1a4ad0" stroke="#0a2080" stroke-width="0.6"/></svg><svg class="a" style="left:27.5px;top:200px" width="8" height="10"><path d="M1.5 1 L7 5 L1.5 9 Z" fill="#6a6a6a"/></svg><div class="txt" style="left:64px;top:198.0px;font-size:14.5px;letter-spacing:0.25px;color:#3a3a3a;font-weight:normal">Extrude003</div><svg class="a" style="left:40.5px;top:216.5px" width="19" height="16"><rect x="3.5" y="6" width="9" height="8.5" fill="none" stroke="#2a2af0" stroke-width="1.3"/><circle cx="12.5" cy="5.2" r="4.8" fill="none" stroke="#2a2af0" stroke-width="1.3"/></svg><div class="txt" style="left:64px;top:217.0px;font-size:14.5px;letter-spacing:0.25px;color:#2a2a2a;font-weight:bold">DWire014</div></div><div class="a" style="left:286.5px;top:56.5px;width:14px;height:226px;border:1px solid #c9c5bf;border-radius:7px;background:#f4f3f2"></div><div class="a" style="left:287.5px;top:70px;width:12px;height:200px;background:#dddbd8;border-left:1px solid #c9c5bf;border-right:1px solid #c9c5bf"></div><div class="a" style="left:287px;top:148px;width:13px;height:111px;border:1px solid #aaa59e;border-radius:6px;background:linear-gradient(90deg,#fbfbfb,#ededeb)"></div><svg class="a" style="left:286px;top:56px" width="16" height="228"><path d="M5 8.5l3-3 3 3z" fill="#555"/><path d="M5 219l3 3 3-3z" fill="#555"/><path d="M6.5 144.5h3M6.5 147h3M6.5 149.5h3" stroke="#9a968f" stroke-width="0.8"/></svg><svg class="a" style="left:145px;top:283px" width="12" height="6"><path d="M2 1v4M5 1v4M8 1v4" stroke="#c4c0ba" stroke-width="1"/></svg><div class="a" style="left:1px;top:288.8px;width:299px;height:238px;border:1px solid #c3bfb9;border-radius:3px"></div><div class="a" style="left:3px;top:290.6px;width:295px;height:235.5px;border:1px solid #bdb9b2;background:#fff;overflow:hidden"><div class="a" style="left:0;top:0;width:293px;height:25.7px;background:linear-gradient(#fefefe,#f3f2f1 60%,#e9e7e4);border-bottom:1px solid #c7c3bd"></div><div class="a" style="left:98.2px;top:1px;width:1px;height:24px;background:#cfcbc5"></div><div class="txt" style="left:3.8px;top:5.5px;font-size:14.5px;letter-spacing:0.45px">Property</div><div class="txt" style="left:103.5px;top:5.5px;font-size:14.5px;letter-spacing:0.3px">Value</div></div><svg class="a" style="left:0;top:525px" width="302" height="35"><path d="M50 3.2 H300" stroke="#c4c0ba" stroke-width="1"/><path d="M51.1 4 L59.2 27.6 Q60.6 30.5 63.8 30.5 L83.8 30.5 Q87 30.5 88.2 27.6 L96.7 4" fill="#efeeec" stroke="#505050" stroke-width="1.1"/><path d="M1.2 1.6 L9.8 28.8 Q11.2 31.6 14.4 31.6 L36.6 31.6 Q39.8 31.6 40.9 28.8 L50.2 1.6" fill="#fff" stroke="#505050" stroke-width="1.1"/><path d="M1.8 1.2 H49.6" stroke="#fff" stroke-width="1.4"/></svg><div class="txt" style="left:10px;top:534px;font-size:14.5px;letter-spacing:0.2px">View</div><div class="txt" style="left:59px;top:533px;font-size:14.5px;letter-spacing:0.2px">Data</div></div>
<svg class="a" style="left:302px;top:382px" width="6" height="10"><path d="M1 2.4h4M1 5.3h4M1 8.3h4" stroke="#c9c5bf" stroke-width="0.9"/></svg>
<svg id="vp" class="a" width="879" height="526" viewBox="0 0 879 526"><defs><linearGradient id="bg" x1="0" y1="0" x2="0" y2="1"><stop offset="0" stop-color="#333162"/><stop offset="1" stop-color="#9696ab"/></linearGradient></defs><rect width="879" height="526" fill="url(#bg)"/><path d="M-8.0 -102.7L887.0 -6.1M-8.0 -93.2L887.0 3.5M-8.0 -83.6L887.0 13.1M-8.0 -74.0L887.0 22.6M-8.0 -64.5L887.0 32.2M-8.0 -54.9L887.0 41.7M-8.0 -45.4L887.0 51.3M-8.0 -26.2L887.0 70.4M-8.0 -16.7L887.0 80.0M-8.0 -7.1L887.0 89.5M-8.0 2.4L887.0 99.1M-8.0 12.0L887.0 108.7M-8.0 21.6L887.0 118.2M-8.0 31.1L887.0 127.8M-8.0 40.7L887.0 137.3M-8.0 50.2L887.0 146.9M-8.0 69.4L887.0 166.0M-8.0 78.9L887.0 175.6M-8.0 88.5L887.0 185.1M-8.0 98.0L887.0 194.7M-8.0 107.6L887.0 204.3M-8.0 117.2L887.0 213.8M-8.0 126.7L887.0 223.4M-8.0 136.3L887.0 232.9M-8.0 145.8L887.0 242.5M-8.0 165.0L887.0 261.6M-8.0 174.5L887.0 271.2M-8.0 184.1L887.0 280.7M-8.0 193.6L887.0 290.3M-8.0 203.2L887.0 299.9M-8.0 212.8L887.0 309.4M-8.0 222.3L887.0 319.0M-8.0 231.9L887.0 328.5M-8.0 241.4L887.0 338.1M-8.0 260.6L887.0 357.2M-8.0 270.1L887.0 366.8M-8.0 279.7L887.0 376.3M-8.0 289.2L887.0 385.9M-8.0 298.8L887.0 395.5M-8.0 308.4L887.0 405.0M-8.0 317.9L887.0 414.6M-8.0 327.5L887.0 424.1M-8.0 337.0L887.0 433.7M-8.0 356.2L887.0 452.8M-8.0 365.7L887.0 462.4M-8.0 375.3L887.0 471.9M-8.0 384.8L887.0 481.5M-8.0 394.4L887.0 491.1M-8.0 404.0L887.0 500.6M-8.0 413.5L887.0 510.2M-8.0 423.1L887.0 519.7M-8.0 432.6L887.0 529.3M-8.0 451.8L887.0 548.4M-8.0 461.3L887.0 558.0M-8.0 470.9L887.0 567.5M-8.0 480.4L887.0 577.1M-8.0 490.0L887.0 586.7M-8.0 499.6L887.0 596.2M-8.0 509.1L887.0 605.8M-8.0 518.7L887.0 615.3M-8.0 528.2L887.0 624.9M-2.6 -8.0L-288.2 532.0M15.9 -8.0L-269.7 532.0M34.4 -8.0L-251.2 532.0M52.9 -8.0L-232.7 532.0M71.4 -8.0L-214.2 532.0M89.9 -8.0L-195.7 532.0M126.9 -8.0L-158.7 532.0M145.4 -8.0L-140.2 532.0M163.9 -8.0L-121.7 532.0M182.4 -8.0L-103.2 532.0M201.0 -8.0L-84.7 532.0M219.5 -8.0L-66.1 532.0M238.0 -8.0L-47.6 532.0M256.5 -8.0L-29.1 532.0M275.0 -8.0L-10.6 532.0M312.0 -8.0L26.4 532.0M330.5 -8.0L44.9 532.0M349.0 -8.0L63.4 532.0M367.5 -8.0L81.9 532.0M386.0 -8.0L100.4 532.0M404.5 -8.0L118.9 532.0M423.0 -8.0L137.4 532.0M441.5 -8.0L155.9 532.0M460.1 -8.0L174.4 532.0M497.1 -8.0L211.5 532.0M515.6 -8.0L230.0 532.0M534.1 -8.0L248.5 532.0M552.6 -8.0L267.0 532.0M571.1 -8.0L285.5 532.0M589.6 -8.0L304.0 532.0M608.1 -8.0L322.5 532.0M626.6 -8.0L341.0 532.0M645.1 -8.0L359.5 532.0M682.1 -8.0L396.5 532.0M700.6 -8.0L415.0 532.0M719.2 -8.0L433.5 532.0M737.7 -8.0L452.1 532.0M756.2 -8.0L470.6 532.0M774.7 -8.0L489.1 532.0M793.2 -8.0L507.6 532.0M811.7 -8.0L526.1 532.0M830.2 -8.0L544.6 532.0M867.2 -8.0L581.6 532.0M885.7 -8.0L600.1 532.0M904.2 -8.0L618.6 532.0M922.7 -8.0L637.1 532.0M941.2 -8.0L655.6 532.0M959.7 -8.0L674.1 532.0M978.2 -8.0L692.6 532.0M996.8 -8.0L711.2 532.0M1015.3 -8.0L729.7 532.0M1052.3 -8.0L766.7 532.0M1070.8 -8.0L785.2 532.0M1089.3 -8.0L803.7 532.0M1107.8 -8.0L822.2 532.0M1126.3 -8.0L840.7 532.0M1144.8 -8.0L859.2 532.0M1163.3 -8.0L877.7 532.0" stroke="rgba(25,25,55,0.2)" stroke-width="1" fill="none"/><path d="M-8.0 -35.8L887.0 60.9M-8.0 59.8L887.0 156.5M-8.0 155.4L887.0 252.1M-8.0 251.0L887.0 347.7M-8.0 346.6L887.0 443.3M-8.0 442.2L887.0 538.9M108.4 -8.0L-177.2 532.0M293.5 -8.0L7.9 532.0M478.6 -8.0L193.0 532.0M663.6 -8.0L378.0 532.0M848.7 -8.0L563.1 532.0M1033.8 -8.0L748.2 532.0" stroke="rgba(20,20,45,0.45)" stroke-width="1" fill="none"/><polygon points="-8.0,149.6 5.0,151.4 111.0,148.0 62.3,288.5 -8.0,261.5" fill="#727272" stroke="#111" stroke-width="1.8" stroke-linejoin="round"/><polygon points="111.0,148.0 114.3,226.4 92.6,290.5 62.3,288.5" fill="#2b2b2b" stroke="#111" stroke-width="1.8" stroke-linejoin="round"/><polygon points="-8.0,261.5 62.3,288.5 -8.0,282.0" fill="#8e8e8e" stroke="#111" stroke-width="1.8" stroke-linejoin="round"/><polygon points="-8.0,282.1 188.7,300.0 135.6,399.4 -8.0,385.5" fill="#727272" stroke="#111" stroke-width="1.8" stroke-linejoin="round"/><polygon points="-8.0,385.5 135.6,399.4 -8.0,517.0" fill="#b3b3b3" stroke="#111" stroke-width="1.8" stroke-linejoin="round"/><polygon points="189.4,21.4 200.4,-8.0 385.3,-8.0 364.7,40.0" fill="#08088a" stroke="#111" stroke-width="1.8" stroke-linejoin="round"/><polygon points="364.7,40.0 385.3,-8.0 415.3,-8.0 417.0,92.0 370.4,195.2" fill="#0a0849" stroke="#111" stroke-width="1.8" stroke-linejoin="round"/><polygon points="189.4,21.4 364.7,40.0 370.4,195.2 195.0,176.8" fill="#0909da" stroke="#111" stroke-width="1.8" stroke-linejoin="round"/><polygon points="355.6,56.1 364.6,42.6 444.0,231.6 430.4,236.5" fill="#a8a8a8" stroke="#111" stroke-width="1.8" stroke-linejoin="round"/><polygon points="364.6,42.6 517.5,163.8 444.0,231.6" fill="#8a8a8a" stroke="#111" stroke-width="1.8" stroke-linejoin="round"/><polygon points="441.0,-8.0 465.0,-8.0 555.7,110.7 541.7,118.8" fill="#b9b9b9" stroke="#111" stroke-width="1.8" stroke-linejoin="round"/><polygon points="465.0,-8.0 530.0,-8.0 586.5,18.2 555.7,110.7" fill="#5f5f5f" stroke="#111" stroke-width="1.8" stroke-linejoin="round"/><polyline points="322.0,286.3 621.2,318.6 695.0,421.8 710.3,394.6" fill="none" stroke="#000" stroke-width="2"/><g transform="translate(-308,-108)"><path d="M1160.9 607.6 L1160.9 594" stroke="#2a2a9c" stroke-width="2"/><path d="M1158.6 596.5 L1160.9 590 L1163.2 596.5 Z" fill="#2a2a9c"/><path d="M1160.9 607.6 L1175 609.3" stroke="#a8282a" stroke-width="2"/><path d="M1173.5 607 L1180 609.9 L1173.2 611.8 Z" fill="#a8282a"/><path d="M1161.5 606.5 L1165 600.7" stroke="#2a9a2a" stroke-width="1.8"/><path d="M1167 594 L1169.5 597.3 L1172 594 M1169.5 597.3 V600.8" stroke="#111" stroke-width="0.9" fill="none"/><path d="M1182 604 L1187 610.8 M1187 604 L1182 610.8" stroke="#111" stroke-width="0.9" fill="none"/></g></svg>
<div class="a" style="left:308px;top:634px;width:214.5px;height:33px;border:1px solid #c3bfb9;border-top:none;border-radius:0 0 4px 4px;background:linear-gradient(#fff,#fbfbfb 70%,#f6f6f5)"></div>
<svg class="a" style="left:314px;top:642px" width="18" height="16"><defs><linearGradient id="gF" x1="0" y1="0" x2="1" y2="1"><stop offset="0" stop-color="#ff8a3a"/><stop offset="1" stop-color="#e01a00"/></linearGradient></defs><path d="M2 1.2 L9.5 1.2 L9.5 4.5 L5.5 4.5 L5.5 7 L8.5 7 L8.5 10 L5.5 10 L5.5 13.8 L2 13.8 Z" fill="url(#gF)" stroke="#b01800" stroke-width="0.5"/><path d="M10.70 3.60 L12.76 4.01 L12.19 5.40 L13.46 6.24 L14.52 5.18 L15.69 6.93 L14.30 7.51 L14.60 9.00 L16.10 9.00 L15.69 11.06 L14.30 10.49 L13.46 11.76 L14.52 12.82 L12.77 13.99 L12.19 12.60 L10.70 12.90 L10.70 14.40 L8.64 13.99 L9.21 12.60 L7.94 11.76 L6.88 12.82 L5.71 11.07 L7.10 10.49 L6.80 9.00 L5.30 9.00 L5.71 6.94 L7.10 7.51 L7.94 6.24 L6.88 5.18 L8.63 4.01 L9.21 5.40 L10.70 5.10 Z" fill="#1a3ab8" stroke="#0a1a70" stroke-width="0.5"/><circle cx="10.7" cy="9" r="1.7" fill="#fff"/></svg>
<div class="txt" style="left:338.5px;top:642.5px;font-size:14.5px;letter-spacing:0.15px">F2-T17-ejemplo-ini : 1*</div>
<svg class="a" style="left:497px;top:643px" width="16" height="15"><path d="M3 3l9.5 9.5M12.5 3L3 12.5" stroke="#5e5e5e" stroke-width="3.2"/></svg>
<div class="a" style="left:301px;top:634px;width:1px;height:0px"></div>
<svg class="a" style="left:1197px;top:112px" width="9" height="5"><path d="M1.5 0v4M4 0v4M6.5 0v4" stroke="#c4c0ba" stroke-width="0.9"/></svg><div class="rb on" style="top:120.4px;height:23px"></div><div class="rb on" style="top:146.3px;height:23px"></div><div class="rb" style="top:172.2px;height:23px"></div><div class="rb on" style="top:198.1px;height:23px"></div><div class="rb" style="top:224.0px;height:23px"></div><div class="rb" style="top:249.9px;height:23px"></div><div class="rb on" style="top:275.8px;height:23px"></div><div class="rb" style="top:301.7px;height:23px"></div><div class="rb on" style="top:327.6px;height:23px"></div><div class="rb" style="top:353.5px;height:23px"></div><div class="rb" style="top:379.4px;height:23px"></div><div class="rb" style="top:405.3px;height:23px"></div><div class="rb" style="top:431.2px;height:23px"></div><div class="rb" style="top:457.1px;height:23px"></div><svg class="a" style="left:0;top:0" width="1216" height="500"><g transform="translate(1202,131.9)"><path d="M-3.6 -0.5 v-2.5 a3.6 3.6 0 0 1 7.2 0 v2.5" fill="none" stroke="#0a3a2e" stroke-width="2.6"/><path d="M-3.6 -0.5 v-2.5 a3.6 3.6 0 0 1 7.2 0 v2.5" fill="none" stroke="#1aa884" stroke-width="1.2"/><rect x="-4.8" y="-0.2" width="9.8" height="7" fill="#1aa884" stroke="#0a3a2e" stroke-width="1"/><rect x="-4" y="0.5" width="2.6" height="5.6" fill="#8ae8c8"/><path d="M-4.5 2.5h9.3M-4.5 4.5h9.3" stroke="#0f7a5a" stroke-width="0.5"/></g><g transform="translate(1202,157.8)"><path d="M-7 6.3 L6.8 -5.4" stroke="#0a3a2e" stroke-width="3.8" stroke-linecap="round" fill="none"/><path d="M-7 6.3 L6.8 -5.4" stroke="#1aa884" stroke-width="2.2" stroke-linecap="round" fill="none"/><ellipse cx="-0.3" cy="0.6" rx="4.2" ry="3.3" transform="rotate(-40 -0.3 0.6)" fill="#1aa884" stroke="#0a3a2e" stroke-width="1"/></g><g transform="translate(1202,183.7)"><path d="M-1.5 -6.8 h3.2 v10.4 h6.3 v3.4 h-15.6 v-3.4 h6.1 z" fill="#1aa884" stroke="#0a3a2e" stroke-width="1"/></g><g transform="translate(1202,209.6)"><path d="M-3.8 -6.8 v13.6 M3.8 -6.8 v13.6 M-6.8 -3.8 h13.6 M-6.8 3.8 h13.6" stroke="#0a3a2e" stroke-width="4.8" stroke-linecap="round" fill="none"/><path d="M-3.8 -6.8 v13.6 M3.8 -6.8 v13.6 M-6.8 -3.8 h13.6 M-6.8 3.8 h13.6" stroke="#1aa884" stroke-width="3.2" stroke-linecap="round" fill="none"/><rect x="-2.2" y="-2.2" width="4.4" height="4.4" fill="#efeeec"/></g><g transform="translate(1202,235.5)"><path d="M-6.2 -5.6 L6.2 6 M6.2 -5.6 L-6.2 6" stroke="#0a3a2e" stroke-width="4.6" stroke-linecap="round" fill="none"/><path d="M-6.2 -5.6 L6.2 6 M6.2 -5.6 L-6.2 6" stroke="#1aa884" stroke-width="3.0" stroke-linecap="round" fill="none"/></g><g transform="translate(1202,261.4)"><path d="M-3.8 -5.6 L7 0.4 M-6.8 -0.2 L4.4 6.2" stroke="#0a3a2e" stroke-width="3.8" stroke-linecap="butt" fill="none"/><path d="M-3.8 -5.6 L7 0.4 M-6.8 -0.2 L4.4 6.2" stroke="#1aa884" stroke-width="2.2" stroke-linecap="butt" fill="none"/></g><g transform="translate(1202,287.3)"><path d="M-4.5 3.2 L6.5 -4.5" stroke="#0a3a2e" stroke-width="3.8" stroke-linecap="round" fill="none"/><path d="M-4.5 3.2 L6.5 -4.5" stroke="#1aa884" stroke-width="2.2" stroke-linecap="round" fill="none"/><circle cx="-4.8" cy="3.6" r="2.9" fill="#1aa884" stroke="#0a3a2e" stroke-width="1"/></g><g transform="translate(1202,313.2)"><path d="M0 -5.6 L-5.6 0 L0 5.6 L5.6 0 Z" fill="none" stroke="#0a3a2e" stroke-width="1.6"/><circle cx="0.0" cy="-5.6" r="2.5" fill="#1aa884" stroke="#0a3a2e" stroke-width="0.9"/><circle cx="0.0" cy="5.6" r="2.5" fill="#1aa884" stroke="#0a3a2e" stroke-width="0.9"/><circle cx="-5.6" cy="0.0" r="2.5" fill="#1aa884" stroke="#0a3a2e" stroke-width="0.9"/><circle cx="5.6" cy="0.0" r="2.5" fill="#1aa884" stroke="#0a3a2e" stroke-width="0.9"/></g><g transform="translate(1202,339.1)"><circle r="7.2" fill="#1aa884" stroke="#0a3a2e" stroke-width="1"/><circle r="4.6" fill="#f0f0ee" stroke="#0a3a2e" stroke-width="1"/><circle r="3.4" fill="none" stroke="#9aa" stroke-width="0.5"/><circle r="2.1" fill="#1aa884" stroke="#0a3a2e" stroke-width="0.8"/></g><g transform="translate(1202,365.0)"><circle cx="-5.4" cy="1" r="2.1" fill="#1aa884" stroke="#0a3a2e" stroke-width="0.9"/><circle cx="0.0" cy="1" r="2.1" fill="#1aa884" stroke="#0a3a2e" stroke-width="0.9"/><circle cx="5.3" cy="1" r="2.1" fill="#1aa884" stroke="#0a3a2e" stroke-width="0.9"/></g><g transform="translate(1202,390.9)"><path d="M-6 0.4 L3.8 6.4" stroke="#0a3a2e" stroke-width="3.6" stroke-linecap="butt" fill="none"/><path d="M-6 0.4 L3.8 6.4" stroke="#1aa884" stroke-width="2.0" stroke-linecap="butt" fill="none"/><circle cx="3" cy="-3.2" r="2.1" fill="#1aa884" stroke="#0a3a2e" stroke-width="0.9"/></g><g transform="translate(1202,416.8)"><path d="M0 -4.8 v9.6 M-4.8 0 h9.6" stroke="#0a3a2e" stroke-width="4.0" stroke-linecap="round" fill="none"/><path d="M0 -4.8 v9.6 M-4.8 0 h9.6" stroke="#1aa884" stroke-width="2.4" stroke-linecap="round" fill="none"/></g><g transform="translate(1202,442.7)"><text x="-1.5" y="-3.2" font-family="Liberation Sans" font-size="5" font-weight="bold" fill="#0a3a2e">1.00</text><text x="-5.5" y="5" font-family="Liberation Sans" font-size="5" font-weight="bold" fill="#0a3a2e" transform="rotate(-90 -5.5 5)">1.00</text><path d="M-3 -2 h8.5 v3 M-3 -2 v9 M-6 7 h6" stroke="#1aa884" stroke-width="1.2" fill="none"/></g><g transform="translate(1202,468.6)"><rect x="-6.3" y="-5.3" width="12.8" height="12.6" rx="0.8" fill="#1aa884" stroke="#0a3a2e" stroke-width="1.1"/><circle cx="-2" cy="3" r="1.4" fill="none" stroke="#0a3a2e" stroke-width="0.9"/></g></svg>
<div class="a" style="left:0;top:667px;width:1216px;height:1px;background:#d3d0cb"></div>
<div class="txt" style="left:4.5px;top:674px;font-size:14.5px;letter-spacing:0.06px">Preselected: F2_T17_ejemplo_ini.DWire014.Edge2 (31.315500,-16.164999,0.000000)</div>
<div class="txt" style="left:1073.5px;top:675px;font-size:14.5px">48.36 x 28.94 mm</div>
<svg class="a" style="left:1200px;top:680px" width="16" height="16"><g fill="#c8c4be"><rect x="12" y="3" width="1.5" height="1.5"/><rect x="9" y="6" width="1.5" height="1.5"/><rect x="12" y="6" width="1.5" height="1.5"/><rect x="6" y="9" width="1.5" height="1.5"/><rect x="9" y="9" width="1.5" height="1.5"/><rect x="12" y="9" width="1.5" height="1.5"/><rect x="3" y="12" width="1.5" height="1.5"/><rect x="6" y="12" width="1.5" height="1.5"/><rect x="9" y="12" width="1.5" height="1.5"/><rect x="12" y="12" width="1.5" height="1.5"/></g></svg>
</body></html>
